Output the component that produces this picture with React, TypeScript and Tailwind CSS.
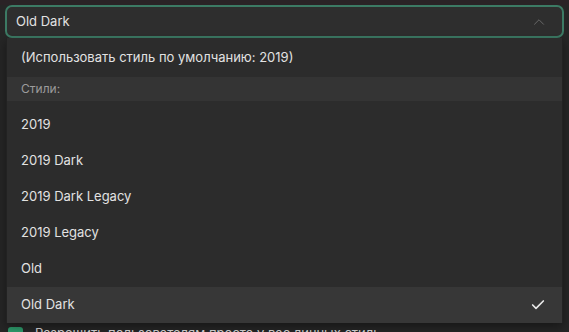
import { ChevronUp, Check } from "lucide-react";

const styles = ["2019", "2019 Dark", "2019 Dark Legacy", "2019 Legacy", "Old", "Old Dark"];
const selected = "Old Dark";

export default function App() {
  return (
    <div
      className="w-[569px] h-[332px] overflow-hidden bg-[#262626] text-[#e2e2e2] relative"
      style={{ fontFamily: "Inter, 'Noto Sans', sans-serif" }}
    >
      <div className="h-[5px] bg-[#2a2326]" />
      <div className="px-[5px]">
        <div className="h-[33px] flex items-center justify-between rounded-[7px] border-2 border-[#3c7a64] bg-[#2e2e2e] pl-[9px] pr-[14px] text-[13px]">
          <span>Old Dark</span>
          <ChevronUp className="w-[18px] h-[18px] text-[#6b6b6b]" strokeWidth={1.25} />
        </div>
      </div>

      <div className="h-[286px]" />

      <div className="flex items-center gap-[12px] pl-[8px] h-[20px] text-[13px] text-[#dcdcdc]">
        <div className="w-[15px] h-[15px] rounded-[3px] bg-[#2f9e6e]" />
        <span>Разрешить пользователям просто у вас личных стиль</span>
      </div>

      <div className="absolute left-[6px] right-[6px] top-[38px] h-[285px] bg-[#2c2c2c] border-x border-[#222] shadow-[0_4px_10px_rgba(0,0,0,0.4)] text-[13px]">
        <div className="h-[39px] flex items-center px-[14px] pt-[1px]">
          (Использовать стиль по умолчанию: 2019)
        </div>
        <div className="h-[24px] flex items-center px-[14px] bg-[#343434] text-[#9c9c9c] text-[12px]">
          Стили:
        </div>
        <div className="h-[6px]" />
        {styles.map((s) => (
          <div
            key={s}
            className={`h-[36px] flex items-center justify-between px-[14px] ${
              s === selected ? "bg-[#373737]" : ""
            }`}
          >
            <span>{s}</span>
            {s === selected && <Check className="w-[16px] h-[16px] mr-[2px] text-[#e8e8e8]" strokeWidth={2.5} />}
          </div>
        ))}
      </div>
    </div>
  );
}
